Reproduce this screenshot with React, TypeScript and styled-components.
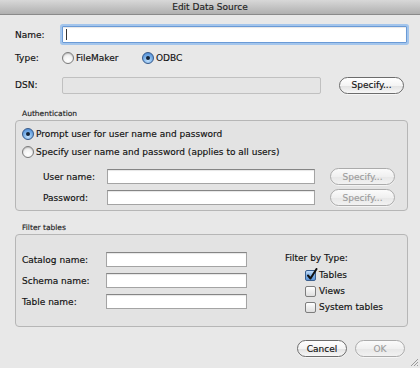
import React, { FC } from 'react';
import styled, { createGlobalStyle, css } from 'styled-components';

const GlobalStyle = createGlobalStyle`
    html, body {
        margin: 0;
        padding: 0;
        background: #e8e8e8;
    }
    * {
        box-sizing: border-box;
    }
`;

const Window = styled.div`
    position: relative;
    width: 420px;
    height: 368px;
    overflow: hidden;
    background: #e8e8e8;
    display: flex;
    flex-direction: column;
    font-family: "DejaVu Sans", "Liberation Sans", sans-serif;
    font-size: 9px;
    color: #111;
    -webkit-text-stroke: 0.15px currentColor;
`;

const TitleBar = styled.div`
    height: 15px;
    flex-shrink: 0;
    background: linear-gradient(#d8d8d8, #b0b0b0);
    border-bottom: 1px solid #8a8a8a;
    display: flex;
    align-items: center;
    justify-content: center;
    color: #222;
`;

const Body = styled.div`
    display: flex;
    flex-direction: column;
    padding: 0 12px 0 15px;
`;

const Row = styled.div<{ $top: number; $h: number; $indent?: number }>`
    display: flex;
    align-items: center;
    height: ${p => p.$h}px;
    margin-top: ${p => p.$top}px;
    padding-left: ${p => p.$indent || 0}px;
    flex-shrink: 0;
`;

const Label = styled.span<{ $w: number }>`
    width: ${p => p.$w}px;
    flex-shrink: 0;
    white-space: nowrap;
`;

const Field = styled.div<{ $w: number; $h?: number; $focused?: boolean; $disabled?: boolean }>`
    width: ${p => p.$w}px;
    height: ${p => p.$h || 15}px;
    flex-shrink: 0;
    display: flex;
    align-items: center;
    background: #fff;
    border: 1px solid #a4a4a4;
    border-top-color: #858585;
    box-shadow: inset 0 1px 1px rgba(0, 0, 0, 0.1);

    ${p => p.$focused && css`
        border-color: #6a9ad6;
        box-shadow: 0 0 0 2px #a3c5ec, inset 0 1px 1px rgba(0, 0, 0, 0.1);
        border-radius: 1px;
    `}

    ${p => p.$disabled && css`
        background: #e5e5e5;
        border-color: #c0c0c0;
        border-radius: 2px;
        box-shadow: none;
    `}
`;

const Caret = styled.span`
    width: 1px;
    height: 11px;
    margin-left: 3px;
    background: #333;
`;

const PillButton = styled.button<{ $w: number }>`
    width: ${p => p.$w}px;
    height: 17px;
    flex-shrink: 0;
    padding: 0;
    border-radius: 9px;
    border: 1px solid #6c6c6c;
    background: linear-gradient(#ffffff, #f4f4f4 50%, #e3e3e3 55%, #f7f7f7);
    box-shadow: 0 1px 0 rgba(255, 255, 255, 0.6);
    font-family: inherit;
    font-size: 9px;
    color: #111;

    &:disabled {
        border-color: #ababab;
        color: #9c9c9c;
        background: linear-gradient(#fbfbfb, #f0f0f0 50%, #e8e8e8 55%, #f2f2f2);
    }
`;

const Choice = styled.label<{ $w?: number }>`
    display: flex;
    align-items: center;
    gap: 2px;
    width: ${p => (p.$w ? `${p.$w}px` : 'auto')};
    white-space: nowrap;
`;

const Radio = styled.span<{ $on?: boolean }>`
    position: relative;
    width: 12px;
    height: 12px;
    flex-shrink: 0;
    border-radius: 50%;
    border: 1px solid #7a7a7a;
    background: radial-gradient(circle at 50% 70%, #ffffff, #f2f2f2 50%, #d2d2d2);
    box-shadow: inset 0 1px 1px rgba(0, 0, 0, 0.15);

    ${p => p.$on && css`
        border-color: #36598a;
        background: radial-gradient(circle at 50% 75%, #c6e2fb, #7fb4ea 45%, #3e7dcc);
        box-shadow: none;

        &::after {
            content: '';
            position: absolute;
            left: 3px;
            top: 3px;
            width: 4px;
            height: 4px;
            border-radius: 50%;
            background: #14243a;
        }
    `}
`;

const CheckBox = styled.span<{ $on?: boolean }>`
    position: relative;
    width: 11px;
    height: 11px;
    flex-shrink: 0;
    border-radius: 2px;
    border: 1px solid #7d7d7d;
    background: linear-gradient(#ffffff, #eeeeee 50%, #dedede);

    ${p => p.$on && css`
        border-color: #3a5f90;
        background: linear-gradient(#c4defa, #7fb0e6 50%, #5c95da);
    `}

    svg {
        position: absolute;
        left: 0px;
        top: -3px;
    }
`;

const CheckRow = styled.div`
    display: flex;
    align-items: center;
    gap: 3px;
    height: 16px;
    margin-left: 20px;
`;

const Legend = styled.div<{ $top: number }>`
    margin-top: ${p => p.$top}px;
    height: 12px;
    line-height: 12px;
    padding-left: 7px;
    font-size: 7.5px;
    color: #222;
    flex-shrink: 0;
`;

const GroupBox = styled.div<{ $h: number }>`
    height: ${p => p.$h}px;
    flex-shrink: 0;
    border: 1px solid #b6b6b6;
    border-radius: 4px;
    background: #e3e3e3;
`;

const AuthBox = styled(GroupBox)`
    display: flex;
    flex-direction: column;
    padding: 6px 0 0 6px;
`;

const FilterBox = styled(GroupBox)`
    display: flex;
    padding: 17px 0 0 6px;
`;

const FieldColumn = styled.div`
    display: flex;
    flex-direction: column;
    gap: 6px;
`;

const TypeColumn = styled.div`
    display: flex;
    flex-direction: column;
    margin-left: 38px;
`;

const TypeTitle = styled.div`
    height: 12px;
    line-height: 12px;
    margin-bottom: 3px;
`;

const Footer = styled.div`
    display: flex;
    justify-content: flex-end;
    gap: 8px;
    margin-top: 13px;
    padding-right: 3px;
`;

const Grip = styled.svg`
    position: absolute;
    right: 1px;
    bottom: 1px;
`;

const CheckMark: FC = () => (
    <svg width="12" height="13" viewBox="0 0 12 13">
        <path d="M2 7.5 L4.5 10.5 L10.5 1" fill="none" stroke="#111" strokeWidth="2" strokeLinecap="round" strokeLinejoin="round" />
    </svg>
);

const TypeOption: FC<{ label: string; checked?: boolean }> = ({ label, checked }) => (
    <CheckRow>
        <CheckBox $on={checked}>{checked && <CheckMark />}</CheckBox>
        {label}
    </CheckRow>
);

const filterFields = ['Catalog name:', 'Schema name:', 'Table name:'];

export default function App() {
    return (
        <Window>
            <GlobalStyle />
            <TitleBar>Edit Data Source</TitleBar>
            <Body>
                <Row $top={11} $h={17}>
                    <Label $w={47}>Name:</Label>
                    <Field $w={345} $h={17} $focused>
                        <Caret />
                    </Field>
                </Row>
                <Row $top={8} $h={14}>
                    <Label $w={47}>Type:</Label>
                    <Choice $w={80}><Radio />FileMaker</Choice>
                    <Choice><Radio $on />ODBC</Choice>
                </Row>
                <Row $top={11} $h={18}>
                    <Label $w={47}>DSN:</Label>
                    <Field $w={259} $h={17} $disabled />
                    <PillButton $w={65} style={{ marginLeft: 18 }}>Specify...</PillButton>
                </Row>

                <Legend $top={14}>Authentication</Legend>
                <AuthBox $h={91}>
                    <Row $top={0} $h={14}>
                        <Choice><Radio $on />Prompt user for user name and password</Choice>
                    </Row>
                    <Row $top={4} $h={14}>
                        <Choice><Radio />Specify user name and password (applies to all users)</Choice>
                    </Row>
                    <Row $top={9} $h={17} $indent={21}>
                        <Label $w={64}>User name:</Label>
                        <Field $w={208} />
                        <PillButton $w={65} disabled style={{ marginLeft: 15 }}>Specify...</PillButton>
                    </Row>
                    <Row $top={4} $h={17} $indent={21}>
                        <Label $w={64}>Password:</Label>
                        <Field $w={208} />
                        <PillButton $w={65} disabled style={{ marginLeft: 15 }}>Specify...</PillButton>
                    </Row>
                </AuthBox>

                <Legend $top={11}>Filter tables</Legend>
                <FilterBox $h={93}>
                    <FieldColumn>
                        {filterFields.map(f => (
                            <Row key={f} $top={0} $h={15}>
                                <Label $w={84}>{f}</Label>
                                <Field $w={141} />
                            </Row>
                        ))}
                    </FieldColumn>
                    <TypeColumn>
                        <TypeTitle>Filter by Type:</TypeTitle>
                        <TypeOption label="Tables" checked />
                        <TypeOption label="Views" />
                        <TypeOption label="System tables" />
                    </TypeColumn>
                </FilterBox>

                <Footer>
                    <PillButton $w={50}>Cancel</PillButton>
                    <PillButton $w={50} disabled>OK</PillButton>
                </Footer>
            </Body>
            <Grip width="10" height="10" viewBox="0 0 10 10">
                <path d="M9 2 L2 9 M9 5 L5 9 M9 8 L8 9" stroke="#9a9a9a" strokeWidth="1" />
            </Grip>
        </Window>
    );
}
